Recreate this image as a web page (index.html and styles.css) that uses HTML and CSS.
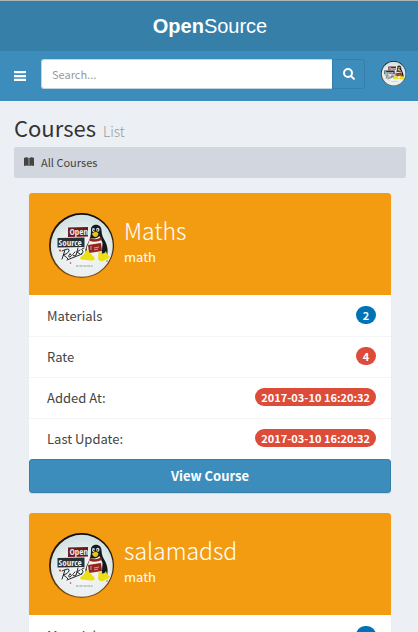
FILE: index.html
```html
<!DOCTYPE html>
<html lang="en">
<head>
<meta charset="utf-8">
<meta name="viewport" content="width=device-width, initial-scale=1">
<title>Courses</title>
<link rel="stylesheet" href="styles.css">
</head>
<body>
<svg class="defs" aria-hidden="true">
  <defs>
    <linearGradient id="rim" x1="0" y1="0" x2="0" y2="1">
      <stop offset="0" stop-color="#0c0d10"/>
      <stop offset=".5" stop-color="#35200e"/>
      <stop offset="1" stop-color="#8d4f12"/>
    </linearGradient>
    <radialGradient id="face" cx=".5" cy=".65" r=".6">
      <stop offset="0" stop-color="#f5f7f6"/>
      <stop offset=".7" stop-color="#e6eeee"/>
      <stop offset="1" stop-color="#d3e1e3"/>
    </radialGradient>
    <symbol id="seal" viewBox="0 0 65 65">
      <circle cx="32.5" cy="32.5" r="32.5" fill="url(#rim)"/>
      <circle cx="32.8" cy="32.8" r="31" fill="url(#face)"/>
      <path d="M19 14.500l20-.5v9.500l-20 .5z" fill="#6b1c20"/>
      <text x="20.500" y="22.300" class="seal-word">Open</text>
      <path d="M8.500 25l27-.5v9.500l-27 .5z" fill="#263034"/>
      <text x="9.500" y="32.700" class="seal-word">Source</text>
      <g fill="none" stroke="#25292c" stroke-width="1" stroke-linecap="round" stroke-linejoin="round">
        <path d="M16 37l-3 9M13 38q8-4 7 0q-1 3-6 4q3 1 5 4M21 41q-3 3 0 3q3-2 0-3M26 39q-4 3-1 4l2-1M29 35l-2 7M31 37l-3 2l3 2M35 35q-4 1-1 3q1 2-2 3M18 47l15-6"/>
      </g>
      <g fill="#d4332c"><circle cx="11" cy="37.500" r="1"/><circle cx="21.500" cy="50" r=".8"/><circle cx="58" cy="48" r=".7"/></g>
      <path d="M42 18c-1-8 10-8 10.500-1c.3 5 1 6 3 10c4 7 4 14 1 19H38c-3-4-2-11 1-16c2-4 3-8 3-12z" fill="#15191b"/>
      <path d="M41.500 25c2 1 6 1 9-2l3 7l-1 14q-7 5-13 0l-2-9z" fill="#f2f1ed"/>
      <path d="M41 25q6 3 11-1l1 3q-7 3-12 1zM39 32l13-2l1 8l-13 2z" fill="#942420"/>
      <path d="M42 33v4M45 35l5-1M45 37l4-1" stroke="#e5b8b1" stroke-width=".8"/>
      <ellipse cx="44.500" cy="17" rx="1.500" ry="2" fill="#d9e4e6"/>
      <ellipse cx="48.800" cy="16.700" rx="1.700" ry="2" fill="#d9e4e6"/>
      <circle cx="45" cy="17.300" r=".8" fill="#111"/><circle cx="48.500" cy="17" r=".8" fill="#111"/>
      <path d="M43 20.500q4-3.500 6.500 0q-.5 3.500-3.500 3.500q-2.500-.5-3-3.500z" fill="#e8c513"/>
      <path d="M36.500 37.500q2.500-1 4 2l5 5q1 3.500-4 3l-9-1q-3-1 0-3.500q3-1 4-5.500z" fill="#ebdf16"/>
      <path d="M50 38q4 5 7 0l1 3l2.500 2.500q.5 2-3.500 3q-4 3-7 1q-1.500-4 0-9.500z" fill="#ebdf16"/>
      <path d="M27 53h17" stroke="#8b9798" stroke-width="1.200" stroke-dasharray="2 .6 1 .5"/>
    </symbol>
  </defs>
</svg>

<header class="header">
  <a class="logo" href="#"><b>Open</b>Source</a>
  <nav class="navbar">
    <button class="toggle" type="button" aria-label="Toggle navigation">
      <svg viewBox="0 0 12 10" width="12" height="10"><path d="M0 0h12v2.300H0zM0 3.900h12v2.300H0zM0 7.700h12v2.300H0z" fill="currentColor"/></svg>
    </button>
    <form class="search">
      <input type="text" placeholder="Search..." aria-label="Search">
      <button type="submit" aria-label="Submit search">
        <svg viewBox="0 0 12 12" width="12" height="12" fill="none" stroke="currentColor" stroke-linecap="round"><circle cx="5" cy="5" r="4" stroke-width="2"/><path d="M8.200 8.200l2.700 2.700" stroke-width="2"/></svg>
      </button>
    </form>
    <a class="user" href="#" aria-label="Account"><svg width="25" height="25"><use href="#seal"/></svg></a>
  </nav>
</header>

<main class="content">
  <h1 class="page-title">Courses <small>List</small></h1>
  <nav class="breadcrumb">
    <svg viewBox="0 0 10 10" width="10" height="10"><path d="M0 1Q2.500-.5 4.700 1v8Q2.500 7.800 0 9zM5.300 1Q7.500-.5 10 1v8Q7.500 7.800 5.300 9z" fill="currentColor"/></svg>
    <span>All Courses</span>
  </nav>

  <div class="courses">
    <article class="card">
      <div class="card-head">
        <svg width="65" height="65"><use href="#seal"/></svg>
        <div><h2>Maths</h2><p>math</p></div>
      </div>
      <ul class="facts">
        <li>Materials <span class="badge blue">2</span></li>
        <li>Rate <span class="badge">4</span></li>
        <li>Added At: <span class="badge">2017-03-10 16:20:32</span></li>
        <li>Last Update: <span class="badge">2017-03-10 16:20:32</span></li>
      </ul>
      <a class="view" href="#">View Course</a>
    </article>

    <article class="card">
      <div class="card-head">
        <svg width="65" height="65"><use href="#seal"/></svg>
        <div><h2>salamadsd</h2><p>math</p></div>
      </div>
      <ul class="facts">
        <li>Materials <span class="badge blue">0</span></li>
      </ul>
    </article>
  </div>
</main>
</body>
</html>
```
FILE: styles.css
```css
* { box-sizing: border-box; }

body {
  margin: 0;
  background: #ecf0f5;
  color: #444;
  font: 13px/20px "Noto Sans CJK SC", "Open Sans", sans-serif;
}

h1, h2, p, ul { margin: 0; padding: 0; }
a { color: inherit; text-decoration: none; }
svg { display: block; flex: none; }
.defs { position: absolute; width: 0; height: 0; }

.header {
  border-top: 1px solid #aeb4b8;
  background: #3c8dbc;
  color: #fff;
}

.logo {
  display: block;
  padding-left: 2px;
  background: #367fa9;
  text-align: center;
  font: 20px/50px "Liberation Sans", Arial, sans-serif;
}

.navbar {
  display: flex;
  align-items: center;
  height: 50px;
  padding: 0 12px 0 14px;
}

.toggle {
  margin: 0 15px 0 0;
  padding: 0;
  border: 0;
  background: none;
  color: inherit;
}

.search {
  display: flex;
  flex: 1;
  height: 30px;
  margin-right: 16px;
  margin-top: -4px;
}
.search input {
  flex: 1;
  min-width: 0;
  padding: 0 10px;
  border: 1px solid #c4d3df;
  border-right: 0;
  border-radius: 3px 0 0 3px;
  background: #fff;
  font: 11px/20px "Noto Sans CJK SC", "Open Sans", sans-serif;
}
.search input::placeholder { color: #999; opacity: 1; }
.search button {
  display: flex;
  align-items: center;
  justify-content: center;
  width: 33px;
  padding: 0;
  border: 1px solid #367fa9;
  border-radius: 0 3px 3px 0;
  background: #3c8dbc;
  color: #fff;
}
.user { margin-top: -6px; }

.content { padding: 10px 12px 20px 14px; }

.page-title {
  color: #333;
  font-size: 22px;
  font-weight: 400;
  line-height: 32px;
}
.page-title small {
  padding-left: 2px;
  color: #999;
  font-size: 14px;
  font-weight: 300;
}

.breadcrumb {
  display: flex;
  align-items: center;
  gap: 7px;
  height: 31px;
  padding: 0 10px 1px;
  border-radius: 2px;
  background: #d2d6de;
  font-size: 11px;
}

.courses {
  display: grid;
  gap: 20px;
  padding: 15px 15px 0;
}

.card {
  border-radius: 3px;
  background: #fff;
  box-shadow: 0 1px 1px rgba(0, 0, 0, .1);
}
.card-head {
  display: flex;
  gap: 10px;
  height: 102px;
  padding: 20px;
  border-radius: 3px 3px 0 0;
  background: #f39c12;
  color: #fff;
}
.card-head h2 {
  margin-top: 3px;
  font-size: 23px;
  font-weight: 300;
  line-height: 28px;
}
.card-head p { line-height: 26px; }

.facts { list-style: none; }
.facts li {
  display: flex;
  align-items: flex-start;
  justify-content: space-between;
  height: 41px;
  padding: 10px 15px 10px 18px;
  border-top: 1px solid #f4f4f4;
}
.facts li:first-child { border-top-color: transparent; }

.badge {
  min-width: 20px;
  padding: 0 6px;
  border-radius: 9px;
  background: #dd4b39;
  color: #fff;
  font-size: 11px;
  font-weight: 700;
  line-height: 18px;
  text-align: center;
}
.badge.blue { background: #0073b7; }

.view {
  display: block;
  border: 1px solid #367fa9;
  border-radius: 3px;
  background: #3c8dbc;
  color: #fff;
  font-weight: 700;
  line-height: 32px;
  text-align: center;
}

.seal-word {
  fill: #eef0ee;
  font: 700 9px "Liberation Sans Narrow", "Open Sans Condensed", "Liberation Sans", sans-serif;
}
```
